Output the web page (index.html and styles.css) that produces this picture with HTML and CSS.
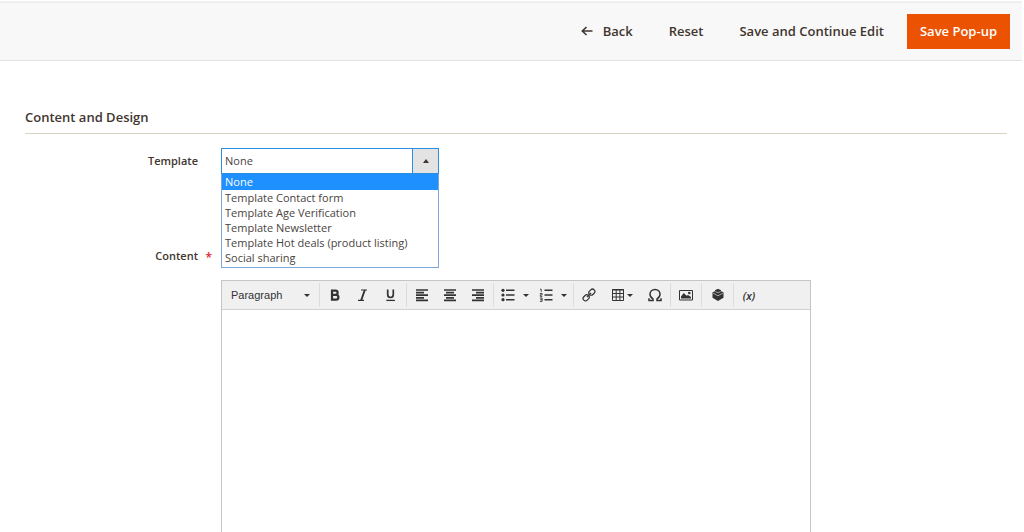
FILE: index.html
```html
<!DOCTYPE html>
<html lang="en">
<head>
<meta charset="utf-8">
<title>Edit Pop-up</title>
<link rel="stylesheet" href="styles.css">
</head>
<body>
<header class="page-actions">
  <button type="button" class="action action-back">
    <svg width="12" height="10" viewBox="0 0 12 10" fill="none" stroke="currentColor" stroke-width="1.6"><path d="M11.5 5H1.5M5.5 1L1.3 5l4.2 4"/></svg>
    Back
  </button>
  <button type="button" class="action">Reset</button>
  <button type="button" class="action">Save and Continue Edit</button>
  <button type="button" class="action action-primary">Save Pop-up</button>
</header>

<main class="section">
  <h2 class="section-title">Content and Design</h2>
  <form class="fields">
    <label class="field-label" for="template">Template</label>
    <div class="select-wrap">
      <select id="template" class="select">
        <option>None</option>
        <option>Template Contact form</option>
        <option>Template Age Verification</option>
        <option>Template Newsletter</option>
        <option>Template Hot deals (product listing)</option>
        <option>Social sharing</option>
      </select>
      <span class="select-arrow"></span>
      <ul class="options" role="listbox" aria-label="Template">
        <li class="option option-selected" role="option" aria-selected="true">None</li>
        <li class="option" role="option">Template Contact form</li>
        <li class="option" role="option">Template Age Verification</li>
        <li class="option" role="option">Template Newsletter</li>
        <li class="option" role="option">Template Hot deals (product listing)</li>
        <li class="option" role="option">Social sharing</li>
      </ul>
    </div>

    <label class="field-label field-label-content" for="content">Content<span class="required">*</span></label>
    <div class="editor">
      <div class="toolbar" role="toolbar" aria-label="Formatting">
        <div class="group">
          <button type="button" class="tool tool-format">Paragraph<span class="caret"></span></button>
        </div>
        <div class="group">
          <button type="button" class="tool" aria-label="Bold">
            <svg width="14" height="14" viewBox="0 0 14 14" fill="none" stroke="currentColor" stroke-width="2.2"><path d="M4 2.600h3.500a2 2 0 0 1 0 4.200H4M4 6.800h4a2.300 2.300 0 0 1 0 4.800H4M4 1.500v11.200"/></svg>
          </button>
          <button type="button" class="tool" aria-label="Italic">
            <svg width="14" height="14" viewBox="0 0 14 14" fill="none" stroke="currentColor"><path stroke-width="1.2" d="M5 2h6M2 12.3h6"/><path stroke-width="1.9" d="M8.8 2L5.2 12.3"/></svg>
          </button>
          <button type="button" class="tool" aria-label="Underline">
            <svg width="14" height="14" viewBox="0 0 14 14" fill="none" stroke="currentColor"><path stroke-width="1.7" d="M3.7 1.5v5a2.7 2.9 0 0 0 5.6 0v-5"/><path stroke-width="1.3" d="M2.3 12.4h8.6"/></svg>
          </button>
        </div>
        <div class="group">
          <button type="button" class="tool" aria-label="Align left">
            <svg width="14" height="14" viewBox="0 0 14 14" fill="none" stroke="currentColor" stroke-width="1.7"><path d="M1 2h12M1 4.6h8M1 7.2h12M1 9.8h8M1 12.4h12"/></svg>
          </button>
          <button type="button" class="tool" aria-label="Align center">
            <svg width="14" height="14" viewBox="0 0 14 14" fill="none" stroke="currentColor" stroke-width="1.7"><path d="M1 2h12M3 4.6h8M1 7.2h12M3 9.8h8M1 12.4h12"/></svg>
          </button>
          <button type="button" class="tool" aria-label="Align right">
            <svg width="14" height="14" viewBox="0 0 14 14" fill="none" stroke="currentColor" stroke-width="1.7"><path d="M1 2h12M5 4.6h8M1 7.2h12M5 9.8h8M1 12.4h12"/></svg>
          </button>
        </div>
        <div class="group">
          <button type="button" class="tool tool-menu" aria-label="Bullet list">
            <svg width="14" height="14" viewBox="0 0 14 14" fill="none" stroke="currentColor" stroke-width="1.6"><path d="M5 2.3h8.5M5 7h8.5M5 11.7h8.5"/><g fill="currentColor" stroke="none"><circle cx="2" cy="2.3" r="1.6"/><circle cx="2" cy="7" r="1.6"/><circle cx="2" cy="11.7" r="1.6"/></g></svg>
            <span class="caret"></span>
          </button>
          <button type="button" class="tool tool-menu" aria-label="Numbered list">
            <svg width="14" height="14" viewBox="0 0 14 14" fill="none" stroke="currentColor"><path stroke-width="1.6" d="M5.5 2.3h8M5.5 7h8M5.5 11.7h8"/><path stroke-width=".9" d="M1 1.2h1.2v2.6M.9 5.5h2.2v1.4H1.3v1.5h2M.9 10h2.2v3.4H.9M1.2 11.7h1.9"/></svg>
            <span class="caret"></span>
          </button>
        </div>
        <div class="group">
          <button type="button" class="tool" aria-label="Insert link">
            <svg width="14" height="14" viewBox="0 0 14 14" fill="none" stroke="currentColor" stroke-width="1.200"><g transform="rotate(-45 7 7)"><rect x="-.3" y="4.6" width="6.6" height="4.800" rx="2.4"/><rect x="7.7" y="4.6" width="6.6" height="4.800" rx="2.4"/><path d="M4 7h6"/></g></svg>
          </button>
          <button type="button" class="tool tool-table" aria-label="Table">
            <svg width="14" height="14" viewBox="0 0 14 14" fill="none" stroke="currentColor"><path d="M1.5 1.5h11v11h-11zM1.5 5.5h11M1.5 9h11M5.2 1.5v11M8.9 1.5v11"/><path d="M1 2h12"/></svg>
            <span class="caret"></span>
          </button>
          <button type="button" class="tool" aria-label="Special character">
            <svg width="14" height="14" viewBox="0 0 14 14" fill="none" stroke="currentColor" stroke-width="1.5"><path d="M1 10.2v2.3h4v-1.6C2.8 9.7 2 8.2 2 6.3 2 3.5 4.2 1.5 7 1.5s5 2 5 4.8c0 1.9-.8 3.4-3 4.6v1.6h4v-2.3"/></svg>
          </button>
        </div>
        <div class="group">
          <button type="button" class="tool" aria-label="Insert image">
            <svg width="14" height="14" viewBox="0 0 14 14"><path fill="none" stroke="currentColor" d="M.5 2.5h13v9.500H.5z"/><path fill="currentColor" d="M2 10.500V8.500L4.800 5l2.700 2.800L9 7l3 2v1.500z"/><circle cx="10.300" cy="5" r="1.300" fill="currentColor"/></svg>
          </button>
        </div>
        <div class="group">
          <button type="button" class="tool tool-widget" aria-label="Insert widget">
            <svg width="14" height="14" viewBox="0 0 14 14"><path fill="currentColor" d="M1.500 4.200L4 3.200V2.200L7 .8l3 1.400v1l2.500 1v5.600L7 13 1.500 9.800z"/><path fill="none" stroke="#eee" stroke-width=".6" d="M2 5l5 2.800L12 5M4.300 3.500L7 4.800l2.700-1.300"/></svg>
          </button>
        </div>
        <div class="group group-last">
          <button type="button" class="tool tool-variable" aria-label="Insert variable">(x)</button>
        </div>
      </div>
      <textarea id="content" class="editor-body"></textarea>
    </div>
  </form>
</main>
</body>
</html>
```
FILE: styles.css
```css
* {
  box-sizing: border-box;
}

body {
  margin: 0;
  min-height: 100vh;
  display: flex;
  flex-direction: column;
  background: #fff;
  color: #41362f;
  font-family: "Open Sans", sans-serif;
  font-size: 11px;
}

button {
  border: 0;
  background: none;
  color: inherit;
  font-family: inherit;
  cursor: pointer;
}

.page-actions {
  display: flex;
  justify-content: flex-end;
  align-items: center;
  margin: 1px 2px 0 0;
  padding: 11px 12px;
  border-top: 2px solid #efefef;
  border-bottom: 1px solid #e3e3e3;
  background: #f8f8f8;
}

.action {
  display: flex;
  align-items: center;
  gap: 10px;
  height: 35px;
  margin-right: 10px;
  padding: 0 13px 2px;
  font-size: 13px;
  font-weight: 600;
}

.action-primary {
  margin: 0;
  background: #eb5202;
  color: #fff;
}

.section {
  flex: 1;
  display: flex;
  flex-direction: column;
  padding: 46px 17px 0 25px;
}

.section-title {
  margin: 0 0 14px;
  padding-bottom: 6px;
  border-bottom: 1px solid #d9d3c2;
  font-size: 13px;
  line-height: 20px;
  font-weight: 600;
}

.fields {
  flex: 1;
  display: grid;
  grid-template-columns: 196px minmax(0, 590px);
  grid-template-rows: 26px 106px 1fr;
}

.field-label {
  position: relative;
  padding-right: 23px;
  line-height: 26px;
  font-weight: 600;
  text-align: right;
}

.field-label-content {
  grid-row: 2;
  align-self: end;
  padding-bottom: 11px;
}

.required {
  position: absolute;
  right: 9px;
  top: 2px;
  color: #e22626;
  font-size: 12px;
}

.select-wrap {
  position: relative;
  width: 218px;
}

.select {
  appearance: none;
  display: block;
  width: 100%;
  height: 26px;
  padding: 0 30px 1px 3px;
  border: 1px solid #2a8fe0;
  border-radius: 0;
  background: #fff;
  color: #4a4440;
  font-family: inherit;
  font-size: 11px;
}

.select-arrow {
  position: absolute;
  top: 1px;
  right: 1px;
  display: flex;
  align-items: center;
  justify-content: center;
  width: 26px;
  height: 24px;
  border-left: 1px solid #2a8fe0;
  background: #e3e3e3;
  pointer-events: none;
}

.select-arrow::before {
  content: "";
  border: 3px solid transparent;
  border-top: 0;
  border-bottom: 4px solid #41362f;
}

.options {
  position: absolute;
  top: 26px;
  left: 0;
  z-index: 1;
  width: 100%;
  margin: 0;
  padding: 0 0 2px;
  border: 1px solid #7da7d9;
  border-top-width: 0;
  background: #fff;
  color: #4a4440;
  list-style: none;
}

.option {
  padding-left: 3px;
  line-height: 15px;
}

.option-selected {
  line-height: 16px;
  background: #1e90ff;
  color: #fff;
}

.editor {
  grid-column: 2;
  grid-row: 3;
  display: flex;
  flex-direction: column;
  border: 1px solid #c5c5c5;
  border-bottom: 0;
}

.toolbar {
  display: flex;
  padding: 2px 0;
  border-bottom: 1px solid #d0d0d0;
  background: #f0f0f0;
  color: #333;
}

.group {
  display: flex;
  padding: 0 1px;
  border-right: 1px solid #dcdcdc;
}

.group-last {
  border-right: 0;
}

.tool {
  display: flex;
  align-items: center;
  justify-content: center;
  width: 28px;
  height: 24px;
  padding: 0;
}

.tool-format {
  justify-content: space-between;
  width: 95px;
  padding: 0 8px;
  font-family: "Liberation Sans", Arial, sans-serif;
  font-size: 11px;
}

.tool-menu {
  gap: 8px;
  width: 38px;
}

.tool-menu:first-child {
  width: 39px;
}

.tool-table {
  gap: 2px;
  width: 38px;
}

.tool-widget {
  width: 29px;
}

.tool-variable {
  font-size: 11px;
  font-style: italic;
  font-weight: 600;
}

.caret {
  border: 3px solid transparent;
  border-top-color: #333;
  border-bottom: 0;
}

.editor-body {
  flex: 1;
  width: 100%;
  padding: 8px;
  border: 0;
  outline: 0;
  resize: none;
  background: #fff;
  font: inherit;
}
```
